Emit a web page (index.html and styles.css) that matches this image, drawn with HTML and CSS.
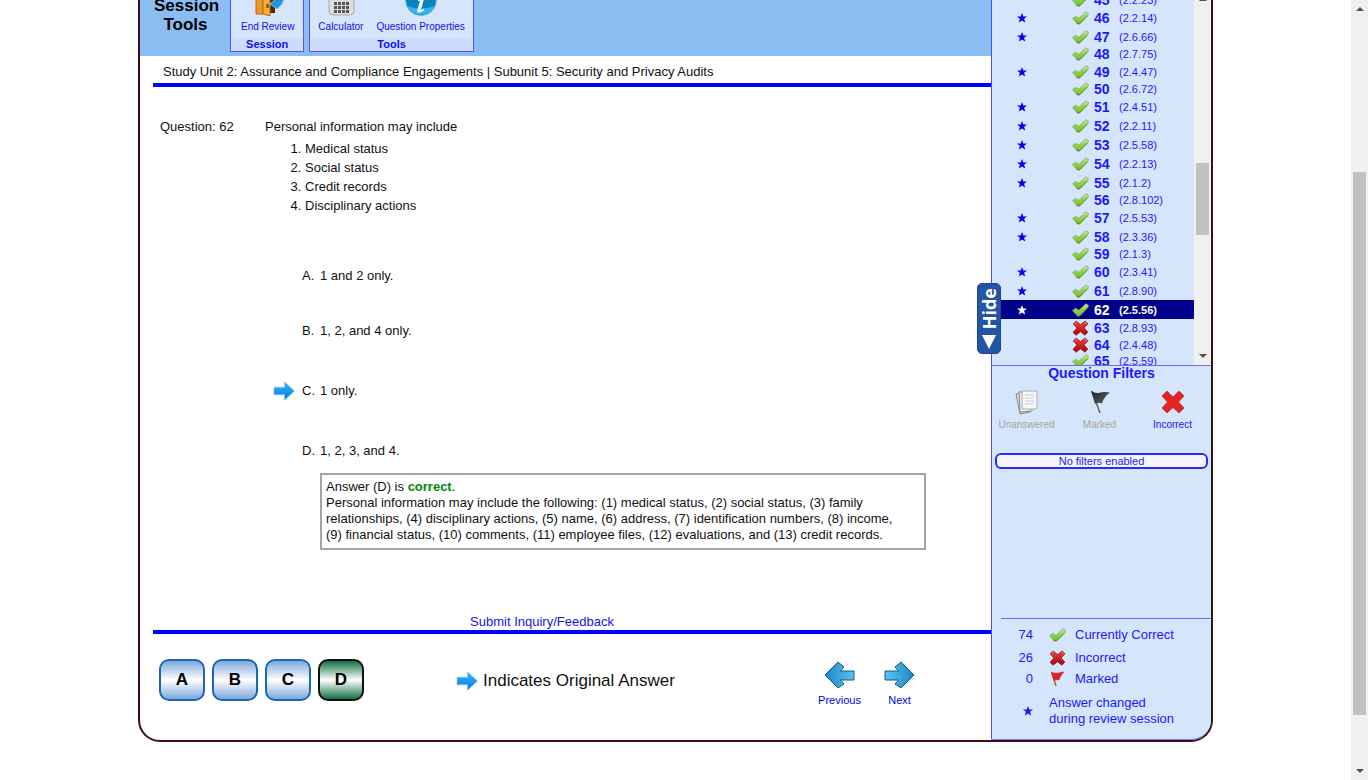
FILE: index.html
```html
<!DOCTYPE html>
<html lang="en">
<head>
<meta charset="utf-8">
<title>Review Session</title>
<link rel="stylesheet" href="styles.css">
</head>
<body>
<svg class="defs" aria-hidden="true">
  <defs>
    <linearGradient id="green" x1="0" y1="0" x2="0" y2="1"><stop offset="0" stop-color="#c4ee90"/><stop offset=".5" stop-color="#8fd443"/><stop offset="1" stop-color="#6cc21a"/></linearGradient>
    <linearGradient id="red" x1="0" y1="0" x2="0" y2="1"><stop offset="0" stop-color="#ee4440"/><stop offset="1" stop-color="#b00006"/></linearGradient>
    <linearGradient id="sky" x1="0" y1="0" x2="0" y2="1"><stop offset="0" stop-color="#35b8fa"/><stop offset="1" stop-color="#0d7ada"/></linearGradient>
    <linearGradient id="tail" x1="0" y1="0" x2="1" y2="0"><stop offset="0" stop-color="#1e86ca"/><stop offset="1" stop-color="#58c4ee"/></linearGradient>
    <linearGradient id="dark" x1="0" y1="0" x2="1" y2="1"><stop offset="0" stop-color="#222"/><stop offset="1" stop-color="#666"/></linearGradient>
  </defs>
  <symbol id="check" viewBox="0 0 17 14"><path d="M.6 7.600 3.700 5.300 6.800 7.300 14 .8 16.500 2.400 15.600 4.800 8 12.800 5.800 13.200 3.500 11z" fill="url(#green)" stroke="#84a878" stroke-width=".8" stroke-linejoin="round"/><path d="M4 11.500 6.200 13 8 12.400 15.500 4.800" fill="none" stroke="#56803f" stroke-width=".8"/></symbol>
  <symbol id="cross" viewBox="0 0 17 16"><path d="M4 1 8.500 4.600 13.200 1 16 3.800 12 8 15.800 12 13 15.200 8.500 11.800 4 15.200 1 12.300 5 8 1.200 4z" fill="url(#red)" stroke="#8a2c2e" stroke-width=".9" stroke-linejoin="round"/><path d="m3 3.500 1.300-1.200M12.800 2.400l1.500 1.200" fill="none" stroke="#ffa29c"/></symbol>
  <symbol id="star" viewBox="0 0 10 10"><path d="M5 0 6.300 3.500H10L7.100 5.800 8.200 9.600 5 7.400 1.800 9.600 2.900 5.800 0 3.500h3.700z" fill="currentColor"/></symbol>
  <symbol id="arrow" viewBox="0 0 22 20"><path d="M1 6.200H11.500V.8L21.500 10l-10 9.200v-5.400H1z" fill="url(#sky)" stroke="#7ecbf5" stroke-width=".6"/></symbol>
  <symbol id="nav" viewBox="0 0 31 28"><path d="M1 14 14 1l6 5-3.500 4H30v9H16.500l3.500 4L14 27z" fill="url(#tail)" stroke="#14588f" stroke-linejoin="round"/></symbol>
</svg>
<div class="page">
  <div class="frame">
    <main class="main">
      <header class="toolbar">
        <h1 class="toolbar-title">Session<br>Tools</h1>
        <section class="group session">
          <div class="tools">
            <button class="tool"><svg width="32" height="32" viewBox="0 0 32 32"><path d="M4 8h7v22H4z" fill="#e9972a" stroke="#bd6808"/><path d="M12 8h11v21H12z" fill="#4d2808"/><path d="m11 8 7 2v22l-7-2z" fill="#f7ad37" stroke="#b96b13"/><path d="M15.500 20v4" stroke="#753c00" stroke-width="2"/><path d="m18 20 4-3 1-5h10l-3 8-5 5z" fill="#2696d9" stroke="#7cc4ea"/></svg>End Review</button>
          </div>
          <h2 class="group-name">Session</h2>
        </section>
        <section class="group">
          <div class="tools">
            <button class="tool"><svg width="32" height="32" viewBox="0 0 32 32"><rect x="4" y="2" width="25" height="29" rx="4" fill="#dedede" stroke="#aaa"/><path stroke="#555" stroke-width="3" stroke-dasharray="3 1" d="M9 19.500h15M9 23.500h15M9 27.500h15"/></svg>Calculator</button>
            <button class="tool"><svg width="32" height="32" viewBox="0 0 32 32"><circle cx="16" cy="16" r="15.500" fill="#0a82c5" stroke="#8fb5cc"/><path d="M2.500 22a15 15 0 0 0 27 0q-14 5-27 0" fill="#27baf0"/><path d="M13 14.500h6l-3 11q0 1.500 3-1v2q-6 4-7 .5l3-10h-2z" fill="#fff"/></svg>Question Properties</button>
          </div>
          <h2 class="group-name">Tools</h2>
        </section>
      </header>

      <div class="content">
        <div class="unit">Study Unit 2: Assurance and Compliance Engagements | Subunit 5: Security and Privacy Audits</div>
        <article class="question">
          <div class="question-number">Question: 62</div>
          <div class="question-body">
            <p class="stem">Personal information may include</p>
            <ol class="items"><li>Medical status</li><li>Social status</li><li>Credit records</li><li>Disciplinary actions</li></ol>
            <div class="options">
              <div class="option"><span class="mark"></span><span class="letter">A.</span>1 and 2 only.</div>
              <div class="option"><span class="mark"></span><span class="letter">B.</span>1, 2, and 4 only.</div>
              <div class="option"><span class="mark"><svg width="22" height="20"><use href="#arrow"/></svg></span><span class="letter">C.</span>1 only.</div>
              <div class="option"><span class="mark"></span><span class="letter">D.</span>1, 2, 3, and 4.</div>
            </div>
            <div class="explanation">Answer (D) is <strong>correct</strong>.<br>Personal information may include the following: (1) medical status, (2) social status, (3) family relationships, (4) disciplinary actions, (5) name, (6) address, (7) identification numbers, (8) income, (9) financial status, (10) comments, (11) employee files, (12) evaluations, and (13) credit records.</div>
          </div>
        </article>
        <div class="feedback"><a href="#">Submit Inquiry/Feedback</a></div>
        <footer class="actions">
          <div class="answers">
            <button class="answer">A</button><button class="answer">B</button><button class="answer">C</button><button class="answer chosen">D</button>
          </div>
          <div class="original"><svg width="22" height="20"><use href="#arrow"/></svg>Indicates Original Answer</div>
          <nav class="nav">
            <button class="step"><svg width="31" height="28"><use href="#nav"/></svg>Previous</button>
            <button class="step next"><svg width="31" height="28"><use href="#nav"/></svg>Next</button>
          </nav>
        </footer>
      </div>
    </main>

    <aside class="side">
      <button class="hide-tab"><span class="hide-text">Hide</span><svg width="14" height="14" viewBox="0 0 14 14"><path d="M0 0h14L7 14z" fill="#fff"/></svg></button>
      <div class="list-box">
        <ul class="list" id="list"></ul>
        <div class="bar small"><svg class="cap" viewBox="0 0 8 4"><path d="M0 4h8L4 0z"/></svg><span class="thumb"></span><svg class="cap" viewBox="0 0 8 4"><path d="M0 0h8L4 4z"/></svg></div>
      </div>
      <section class="filters">
        <h2 class="filters-title">Question Filters</h2>
        <div class="filter-row">
          <button class="filter" disabled><svg width="26" height="26" viewBox="0 0 26 26"><path d="m2 5 11-1 3 19-10 2z" fill="#ddd" stroke="#888"/><path d="M5 3h12l1 19-12 1z" fill="#eee" stroke="#888"/><rect x="8" y="2" width="15" height="18" rx="1" fill="#f7f7f7" stroke="#aaa"/><path d="M11 6h9M11 9h9M11 12h9M11 15h9" stroke="#ccc"/></svg>Unanswered</button>
          <button class="filter" disabled><svg width="26" height="26" viewBox="0 0 26 26"><path d="m5 2 8 22" stroke="#666" stroke-width="1.500"/><path d="M4 2q5 3 9 1.500 4-1 10 0-6 4-8 11-3-1.500-7 .5z" fill="url(#dark)"/></svg>Marked</button>
          <button class="filter"><svg width="26" height="26" viewBox="0 0 26 26"><path d="m7 2 6 6 6-6 5 5-5.500 6 5.500 6-5 5-6-5.500L7 24l-5-5 5.500-6L2 7z" fill="#e52322" stroke="#b94146" stroke-linejoin="round"/></svg>Incorrect</button>
        </div>
        <div class="filter-status">No filters enabled</div>
      </section>
      <section class="legend">
        <span class="count">74</span><svg width="17" height="14"><use href="#check"/></svg><span class="meaning">Currently Correct</span>
        <span class="count">26</span><svg width="17" height="16"><use href="#cross"/></svg><span class="meaning">Incorrect</span>
        <span class="count">0</span><svg width="17" height="16" viewBox="0 0 17 16"><path d="m3 2 4 13" stroke="#a36c43" stroke-width="1.500"/><path d="M2 1q4 2 7 1 3-1 6-1-4 4-5 8-3-1-5 1z" fill="#e5201e" stroke="#bd3430" stroke-width=".5"/></svg><span class="meaning">Marked</span>
        <span class="count"><svg width="10" height="10"><use href="#star"/></svg></span><span class="wide">Answer changed<br>during review session</span>
      </section>
    </aside>
  </div>
</div>
<div class="bar"><svg class="cap" viewBox="0 0 8 4"><path d="M0 4h8L4 0z"/></svg><span class="thumb"></span><svg class="cap" viewBox="0 0 8 4"><path d="M0 0h8L4 4z"/></svg></div>
<script src="list.js"></script>
</body>
</html>
```
FILE: styles.css
```css
* { box-sizing: border-box; }
body {
  margin: 0;
  height: 100vh;
  display: flex;
  overflow: hidden;
  background: #fff;
  color: #111;
  font: 13px/16px "Liberation Sans", Arial, sans-serif;
}
h1, h2, p, ul, ol { margin: 0; padding: 0; }
button { font: inherit; color: inherit; background: none; border: 0; padding: 0; cursor: pointer; }
svg { display: block; flex: none; }
.defs { position: absolute; width: 0; height: 0; }
.page { flex: 1; min-width: 0; padding: 0 16px; }
.frame {
  max-width: 1075px;
  margin: 0 auto;
  display: grid;
  grid-template-columns: minmax(0, 1fr) 220px;
  border: 2px solid #3d1010;
  border-top: 0;
  border-radius: 0 0 22px 22px;
}

/* Toolbar */
.toolbar {
  height: 56px;
  padding: 0 0 4px 14px;
  display: flex;
  align-items: flex-end;
  gap: 5px;
  background: #8bbdf2;
}
.toolbar-title { width: 63px; margin-right: 8px; padding-bottom: 18px; font-size: 17px; line-height: 19px; text-align: center; color: #000; }
.group { border: 1px solid #5050ff; background: #d5e5fb; color: #0f0ff0; }
.tools { display: flex; gap: 13px; padding: 0 8px; }
.session .tools { padding: 0 9px 0 10px; }
.tool { display: flex; flex-direction: column; align-items: center; gap: 3px; padding-bottom: 3px; font-size: 10px; line-height: 16px; white-space: nowrap; }
.group-name { margin: 0 1px; background: #ccdcff; font-size: 11px; line-height: 13px; text-align: center; }

/* Question */
.content { padding-left: 13px; }
.unit { padding: 8px 10px 3px; border-bottom: 4px solid #00f; }
.question { display: flex; padding: 32px 0 0 7px; min-height: 527px; }
.question-number { width: 105px; flex: none; }
.question-body { flex: 1; padding-right: 65px; }
.items { padding: 4px 0 0 40px; line-height: 19px; }
.options { display: grid; grid-template-rows: 64px 46px 74px 45px; padding: 29px 0 0 8px; }
.option { display: flex; align-items: center; }
.mark { width: 29px; }
.letter { width: 18px; }
.explanation { margin-left: 55px; padding: 4px 14px 4px 4px; border: 2px solid #a5a5a5; min-height: 77px; }
.explanation strong { color: #008a00; }
.feedback { border-bottom: 4px solid #00f; text-align: center; padding-right: 60px; color: #1414e6; }
.feedback a { color: inherit; text-decoration: none; }
.actions { display: flex; align-items: flex-start; padding: 25px 70px 32px 6px; }
.answers { display: flex; gap: 7px; }
.answer {
  width: 46px;
  height: 42px;
  border: 2px solid #1c66b4;
  border-radius: 10px;
  background: linear-gradient(#7fa8dd, #fff 50%, #7fa8dd);
  color: #000;
  font-weight: bold;
  font-size: 17px;
}
.chosen { border-color: #111; background: linear-gradient(#0f7040, #fff 50%, #0f7040); }
.original { display: flex; align-items: center; gap: 5px; height: 43px; margin-left: 92px; font-size: 17px; }
.nav { margin-left: auto; padding-top: 2px; display: flex; gap: 17px; color: #0000e6; }
.step { display: flex; flex-direction: column; align-items: center; gap: 3px; width: 43px; font-size: 11px; }
.next svg { transform: scaleX(-1); }

/* Side panel */
.side {
  position: relative;
  display: flex;
  flex-direction: column;
  border-left: 1px solid #4a4aff;
  border-bottom: 1px solid #7a7aff;
  border-radius: 0 0 20px 0;
  background: #d5e5fb;
  color: #1a1aff;
}
.hide-tab {
  position: absolute;
  left: -15px;
  top: 283px;
  width: 24px;
  height: 71px;
  display: flex;
  flex-direction: column;
  align-items: center;
  justify-content: center;
  gap: 5px;
  border: 1px solid #1c4788;
  border-radius: 5px;
  background: #2255a4;
  color: #fff;
}
.hide-text { writing-mode: vertical-rl; transform: rotate(180deg); font: bold 18px/22px "Open Sans", sans-serif; }
.list-box { display: flex; height: 366px; overflow: hidden; border-bottom: 1px solid #6a6aff; }
.list { flex: 1; margin-top: -8px; list-style: none; }
.row {
  display: grid;
  grid-template-columns: 71px 22px 25px 1fr;
  align-items: center;
  width: 100%;
  height: 17px;
  padding-left: 9px;
  text-align: left;
  font-size: 11px;
}
.row b { font-size: 14px; }
.row.check { height: 16px; }
.row.starred { height: 19px; }
.row svg.star { margin-left: 16px; color: #0000f0; }
.row.current { color: #fff; background: #00008b; }
.row.current svg.star { color: #fff; }
.row.current span { font-weight: bold; }
.filters-title { font-size: 14px; line-height: 15px; text-align: center; }
.filter-row { display: grid; grid-template-columns: repeat(3, 73px); padding-top: 8px; margin-left: -2px; }
.filter { display: flex; flex-direction: column; align-items: center; gap: 4px; font-size: 10px; line-height: 12px; }
.filter:disabled { color: #a5a59b; }
.filter-status { margin: 22px 3px 0; border: 2px solid #2a2aff; border-radius: 6px; background: #f6f5ff; font-size: 11px; line-height: 12px; text-align: center; }
.legend {
  margin: auto 0 0 9px;
  padding: 5px 0 7px;
  border-top: 1px solid #6a6aff;
  display: grid;
  grid-template-columns: 32px 17px 1fr;
  grid-template-rows: 22px 23px 20px 43px;
  align-items: center;
  column-gap: 16px;
}
.meaning { margin-left: -7px; }
.count { display: flex; justify-content: flex-end; }
.wide { grid-column: 2 / 4; }

/* Scroll tracks */
.bar { width: 17px; flex: none; display: flex; flex-direction: column; align-items: center; background: #f0f0f0; padding: 7px 0; }
.cap { width: 8px; height: 4px; fill: #505050; }
.thumb { flex: 0 0 543px; width: 13px; margin: 161px 0 auto; background: #c1c1c1; }
.small { padding: 0 0 7px; margin-top: -3px; }
.small .thumb { flex-basis: 72px; margin-top: 162px; }
```
FILE: list.js
```js
const rows = [
  [45, "2.2.23", 0], [46, "2.2.14", 1], [47, "2.6.66", 1], [48, "2.7.75", 0], [49, "2.4.47", 1],
  [50, "2.6.72", 0], [51, "2.4.51", 1], [52, "2.2.11", 1], [53, "2.5.58", 1], [54, "2.2.13", 1],
  [55, "2.1.2", 1], [56, "2.8.102", 0], [57, "2.5.53", 1], [58, "2.3.36", 1], [59, "2.1.3", 0],
  [60, "2.3.41", 1], [61, "2.8.90", 1], [62, "2.5.56", 1], [63, "2.8.93", 0, "cross"],
  [64, "2.4.48", 0, "cross"], [65, "2.5.59", 0]
];
document.getElementById("list").innerHTML = rows.map(([n, ref, starred, icon = "check"]) => `
  <li><button class="row ${icon} ${starred ? "starred" : ""} ${n === 62 ? "current" : ""}">
    ${starred ? '<svg class="star" width="10" height="10"><use href="#star"/></svg>' : "<i></i>"}
    <svg width="17" height="${icon === "check" ? 14 : 16}"><use href="#${icon}"/></svg>
    <b>${n}</b><span>(${ref})</span>
  </button></li>`).join("");
```
